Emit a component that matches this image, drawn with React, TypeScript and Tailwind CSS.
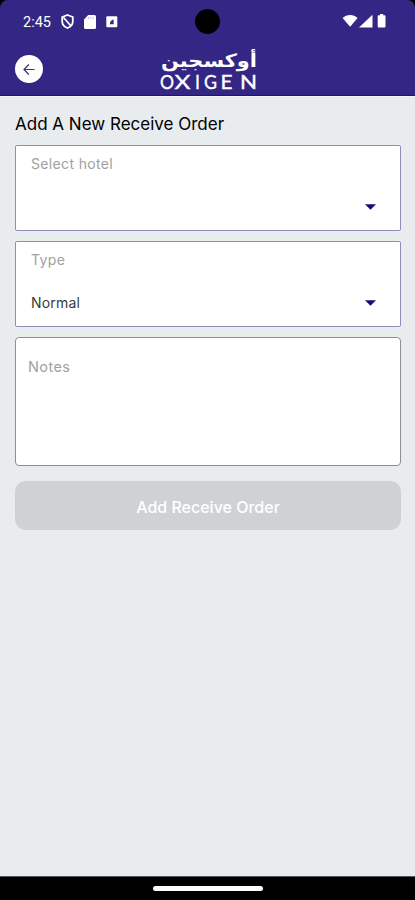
import { useState } from 'react'

function StatusBar() {
  return (
    <div className="relative h-[43px] flex items-center justify-between pl-[23px] pr-[27px] text-white">
      <div className="flex items-center">
        <span className="w-[28px] pt-[3px] whitespace-nowrap font-[Roboto] text-[14.5px] leading-none">2:45</span>
        <svg className="ml-[10px]" width="13" height="15" viewBox="0 0 13 15" fill="none" stroke="currentColor" strokeWidth="1.8">
          <path d="M6.5 1 11.8 3v4.2c0 3-2 5.6-5.3 6.800C3.200 12.800 1.200 10.200 1.200 7.200V3Z" />
          <path d="M2.500 3.500 10 12" />
        </svg>
        <svg className="ml-[10px]" width="12" height="14" viewBox="0 0 12 14" fill="currentColor">
          <path d="M4.200 0H10.500A1.500 1.500 0 0 1 12 1.500v11a1.500 1.500 0 0 1-1.500 1.500h-9A1.500 1.500 0 0 1 0 12.500V4.500Z" />
          <path d="M4.500 2v2M6.800 2v2M9 2v2" stroke="#b9b5d6" strokeWidth=".8" />
        </svg>
        <svg className="ml-[10px]" width="12" height="12" viewBox="0 0 12 12">
          <rect x=".3" y=".3" width="11" height="11" rx="1" fill="currentColor" />
          <path d="M3.800 8.300 4.500 5.300 7.600 3.300V8.200Z" fill="#332684" />
        </svg>
      </div>
      {/* Camera cutout */}
      <div className="absolute left-[195px] top-[9px] size-[25px] rounded-full bg-black" />
      <svg width="46" height="15" viewBox="0 0 46 15" fill="currentColor">
        <path d="M.6 4C4.600 0 11.600 0 15.600 4L8.100 12.800Z" />
        <path d="M30.500 .8V13.500H17Z" />
        <path d="M38 0h3.200v1.200h1.300q1 0 1 1v10.300q0 1-1 1h-5.800q-1 0-1-1V2.200q0-1 1-1H38Z" />
      </svg>
    </div>
  )
}

const letters = [
  { char: 'O', x: 3, width: 14 },
  { char: 'X', x: 17.5, width: 16 },
  { char: 'I', x: 38, width: 5 },
  { char: 'G', x: 47, width: 13 },
  { char: 'E', x: 63.5, width: 12 },
  { char: 'N', x: 83, width: 17 },
]

function Logo() {
  return (
    <svg width="104" height="46" viewBox="0 0 104 46" fill="white">
      <text x="52" y="20" direction="rtl" textAnchor="middle" fontFamily="'DejaVu Sans', sans-serif" fontWeight="700" fontSize="18.5" textLength="96" lengthAdjust="spacingAndGlyphs">
        أوكسجين
      </text>
      <g fontFamily="Lato, sans-serif" fontSize="18.5" fontWeight="400" stroke="white" strokeWidth=".35">
        {letters.map(({ char, x, width }) => (
          <text key={char} x={x} y="41.5" textLength={width} lengthAdjust="spacingAndGlyphs">
            {char}
          </text>
        ))}
      </g>
    </svg>
  )
}

function Header() {
  return (
    <header className="h-[53px] flex border-b border-[#211274]">
      <button aria-label="Back" className="mt-[12px] ml-[15px] size-[28px] shrink-0 rounded-full bg-white flex items-center justify-center">
        <svg width="12" height="12" viewBox="0 0 12 12" fill="none" stroke="#3b3170" strokeWidth="1.2">
          <path d="M11.500 6.500H1.200M5.800 1.500 1 6.500l4.800 5" />
        </svg>
      </button>
      <div className="ml-[114px] mt-[4px]">
        <Logo />
      </div>
    </header>
  )
}

function SelectField({ label, value }: { label: string; value?: string }) {
  return (
    <div className="h-[86px] rounded-[2px] border border-[#8f8cb5] bg-white pl-[15px] pr-[24px] pt-[9px]">
      <p className="text-[14px] leading-[18px] tracking-[0.35px] text-[#a1a1a1]">{label}</p>
      <button className="mt-[18px] w-full h-[30px] flex items-center justify-between">
        <span className="text-[14px] tracking-[0.2px] text-[#3a3a3a]">{value}</span>
        <svg className="mt-[2px]" width="11" height="6" viewBox="0 0 11 6" fill="#180b78">
          <path d="M0 .3H11L5.500 5.700Z" />
        </svg>
      </button>
    </div>
  )
}

export default function App() {
  const [notes, setNotes] = useState('')

  return (
    <div className="h-[900px] w-full bg-black flex flex-col overflow-hidden font-[Inter,sans-serif]">
      <div className="shrink-0 rounded-t-[8px] bg-[#332684]">
        <StatusBar />
        <Header />
      </div>

      <main className="flex-1 border-t border-[#f3f6fb] bg-[#e8ecef] pl-[15px] pr-[14px] pt-[16px]">
        <h1 className="h-[22px] mb-[10px] text-[17px] leading-[22px] whitespace-nowrap text-black">Add A New Receive Order</h1>
        <div className="flex flex-col gap-[10px]">
          <SelectField label="Select hotel" />
          <SelectField label="Type" value="Normal" />
          <textarea
            value={notes}
            onChange={(e) => setNotes(e.target.value)}
            placeholder="Notes"
            className="block h-[129px] resize-none rounded-[4px] border border-[#8c9092] bg-white px-[12px] py-[19px] text-[14.5px] leading-[20px] tracking-[0.4px] placeholder:text-[#a1a1a1] outline-none"
          />
        </div>
        <button className="mt-[15px] h-[49px] w-full rounded-[11px] bg-[#cfd2d5] pt-[2px] text-[16px] font-medium text-white">
          Add Receive Order
        </button>
      </main>

      {/* Gesture bar */}
      <div className="h-[24px] shrink-0 border-t border-[#555] flex justify-center">
        <div className="mt-[9px] h-[5px] w-[110px] rounded-full bg-white" />
      </div>
    </div>
  )
}
